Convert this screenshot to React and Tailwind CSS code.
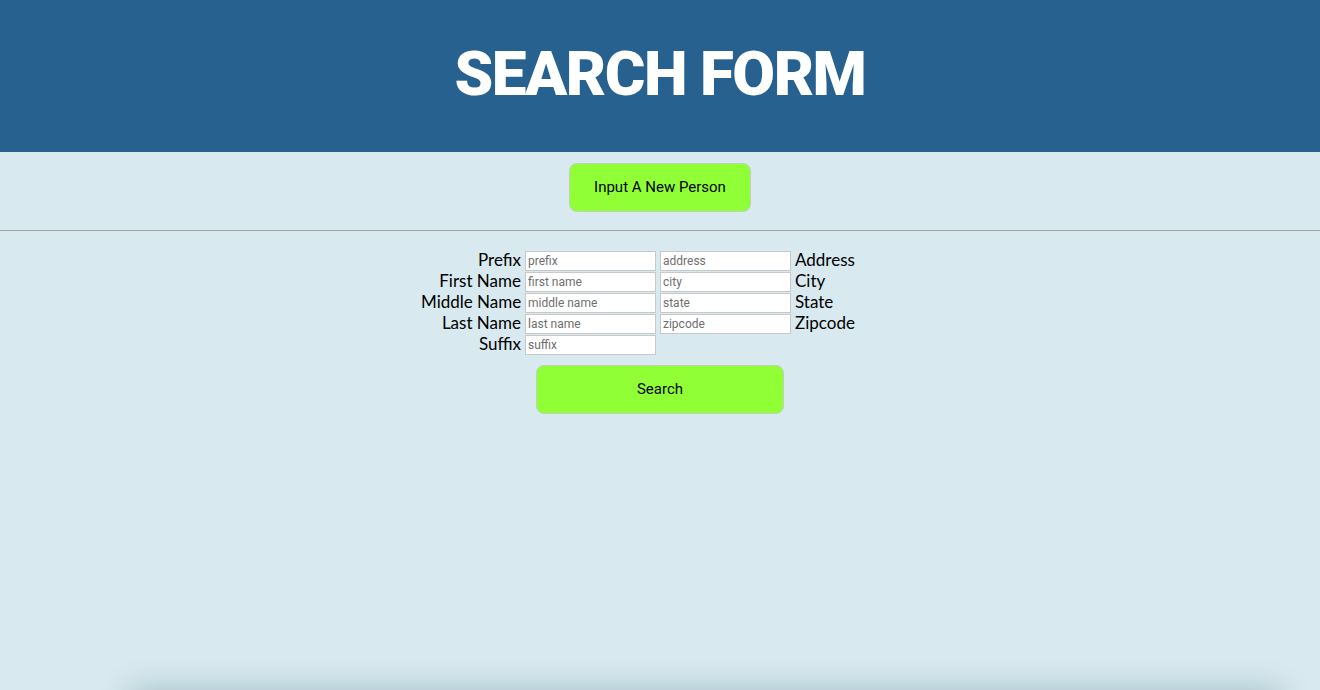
import React from "react";

const leftFields = [
  { label: "Prefix", placeholder: "prefix" },
  { label: "First Name", placeholder: "first name" },
  { label: "Middle Name", placeholder: "middle name" },
  { label: "Last Name", placeholder: "last name" },
  { label: "Suffix", placeholder: "suffix" },
];

const rightFields = [
  { label: "Address", placeholder: "address" },
  { label: "City", placeholder: "city" },
  { label: "State", placeholder: "state" },
  { label: "Zipcode", placeholder: "zipcode" },
];

const inputCls =
  "h-[20px] w-[131px] bg-white border border-[#c8c8c8] px-[2px] text-[12px] text-black placeholder:text-[#6f6f6f] outline-none font-['Roboto',sans-serif]";

export default function App() {
  return (
    <div className="min-h-screen bg-[#d8e9ef] font-['Lato',sans-serif] relative overflow-hidden">
      {/* Header */}
      <div className="h-[152px] bg-[#27618f] flex items-center justify-center">
        <h1 className="text-white text-[62px] font-black font-['Roboto',sans-serif] leading-none tracking-[-1.5px] mt-[-5px]">
          SEARCH FORM
        </h1>
      </div>

      {/* New person */}
      <div className="flex justify-center pt-[11px] pb-[18px]">
        <button className="w-[182px] h-[49px] rounded-[8px] bg-[#90ff36] border border-[#c2cfc0] text-[15px] text-black font-['Roboto',sans-serif]">
          Input A New Person
        </button>
      </div>
      <hr className="border-t border-[#a3a3a3]" />

      {/* Form */}
      <div className="flex flex-col items-center pt-[20px]">
        <div className="grid grid-cols-[100px_131px_131px_104px] gap-x-1 gap-y-[1px] text-[17px] text-black">
          {leftFields.map((f, i) => (
            <React.Fragment key={f.label}>
              <label className="text-right leading-[17px] h-[20px] whitespace-nowrap">{f.label}</label>
              <input className={inputCls} placeholder={f.placeholder} />
              {rightFields[i] ? (
                <>
                  <input className={inputCls} placeholder={rightFields[i].placeholder} />
                  <label className="leading-[17px] h-[20px]">{rightFields[i].label}</label>
                </>
              ) : (
                <>
                  <div />
                  <div />
                </>
              )}
            </React.Fragment>
          ))}
        </div>
        <button className="mt-[10px] w-[248px] h-[49px] rounded-[8px] bg-[#90ff36] border border-[#c2cfc0] text-[15px] text-black font-['Roboto',sans-serif]">
          Search
        </button>
      </div>

      {/* bottom shadow of element below the fold */}
      <div className="absolute left-[130px] right-[40px] bottom-[-30px] h-[30px] bg-[#d8e9ef] shadow-[0_0_30px_rgba(0,60,80,0.25)]" />
    </div>
  );
}
